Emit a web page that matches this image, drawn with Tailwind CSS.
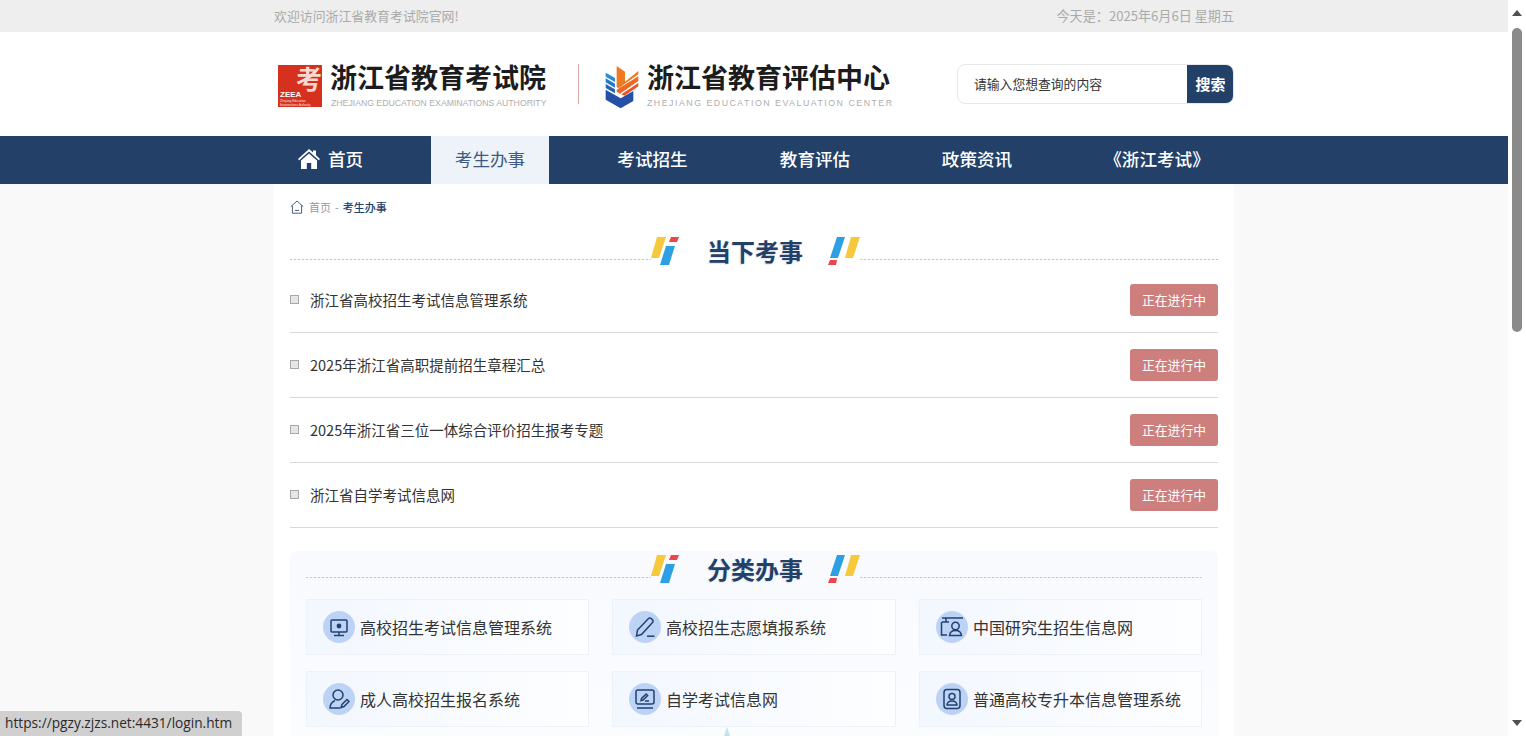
<!DOCTYPE html>
<html lang="zh-CN">
<head>
<meta charset="utf-8">
<title>考生办事</title>
<script src="https://cdn.jsdelivr.net/npm/@tailwindcss/browser@4"></script>
</head>
<body class="h-[736px] overflow-hidden bg-white font-['Noto_Sans_CJK_SC','Liberation_Sans',sans-serif]">
<div class="flex h-[736px] overflow-hidden">
  <main class="w-[1508px] h-[736px] overflow-hidden bg-[#f9f9fa]">
    <!-- top bar -->
    <div class="h-8 bg-[#eeeeee]">
      <div class="w-[960px] mx-auto h-8 flex items-center justify-between text-[12.9px] text-[#aaaaaa]">
        <span>欢迎访问浙江省教育考试院官网!</span>
        <span class="text-[13.1px]">今天是：2025年6月6日 星期五</span>
      </div>
    </div>
    <!-- header -->
    <header class="h-[104px] bg-white">
      <div class="w-[960px] mx-auto h-[104px] flex items-start">
        <div class="ml-1 mt-[33px] w-[44px] h-[42px] bg-[#d6301e] relative shrink-0">
          <span class="absolute right-0 top-0 text-[26px] leading-[25px] font-bold text-[#fbd9d0]">考</span>
          <span class="absolute left-[2px] top-[25px] text-[8px] leading-[9px] font-bold text-white font-['Liberation_Sans']">ZEEA</span>
          <span class="absolute left-[2px] top-[34px] text-[3px] leading-[4px] text-white/80 font-['Liberation_Sans'] whitespace-nowrap">Zhejiang Education<br>Examinations Authority</span>
        </div>
        <div class="ml-2 mt-[27px] w-[220px] shrink-0">
          <div class="text-[27px] leading-[36px] font-semibold text-[#1c1c1c] whitespace-nowrap">浙江省教育考试院</div>
          <div class="text-[8.7px] leading-[12px] mt-[2px] ml-px text-[#aeaeae] whitespace-nowrap font-['Liberation_Sans']">ZHEJIANG EDUCATION EXAMINATIONS AUTHORITY</div>
        </div>
        <div class="ml-[28px] mt-8 w-px h-10 bg-[#dba9a6] shrink-0"></div>
        <svg class="ml-[26px] mt-[33px] shrink-0" width="34" height="44" viewBox="105 42 102 132">
          <polygon fill="#2a8ad6" points="107,65 135,81 135,93 107,77"/>
          <polygon fill="#2878c8" points="107,82 135,98 135,110 107,94"/>
          <polygon fill="#2464b8" points="107,99 135,115 135,127 107,111"/>
          <polygon fill="#2450a8" points="107,116 152,142 190,120 190,150 152,172 107,146"/>
          <polygon fill="#ee7a22" points="140,45 165,62 165,92 205,60 205,70 146,112 140,108"/>
          <polygon fill="#ea6a24" points="205,76 205,90 150,128 140,122 140,116"/>
          <polygon fill="#e4552a" points="205,96 205,106 190,116 164,134 154,130"/>
        </svg>
        <div class="ml-2 mt-[27px] w-[246px] shrink-0">
          <div class="text-[27px] leading-[36px] font-semibold text-[#1c1c1c] whitespace-nowrap">浙江省教育评估中心</div>
          <div class="text-[8.8px] leading-[12px] mt-[2px] tracking-[1.5px] text-[#aeaeae] whitespace-nowrap font-['Liberation_Sans']">ZHEJIANG EDUCATION EVALUATION CENTER</div>
        </div>
        <div class="ml-[64px] mt-8 w-[277px] h-10 flex border border-[#e6e8ec] rounded-lg overflow-hidden shrink-0 bg-white">
          <div class="flex-1 pl-4 flex items-center text-[12.8px] text-[#333333]">请输入您想查询的内容</div>
          <div class="w-[47px] -my-px -mr-px bg-[#234069] flex items-center justify-center text-[15px] font-bold text-white">搜索</div>
        </div>
      </div>
    </header>
    <!-- nav -->
    <nav class="h-12 bg-[#234069]">
      <div class="w-[960px] mx-auto h-12 flex text-[17.6px] font-medium text-white">
        <a class="w-[157px] flex items-center pl-6 gap-2 pb-[2px]">
          <svg width="22" height="20" viewBox="0 0 22 20" fill="#ffffff"><path d="M11 0 15 3.600V1.500h3v4.800l4 3.600-1.200 1.400L11 2.600 1.200 11.300 0 9.900Z"/><path d="M11 4.400 19 11.400V20h-5.800v-6H8.800v6H3v-8.600Z"/></svg>
          <span>首页</span>
        </a>
        <a class="w-[118px] flex items-center justify-center bg-[#eef2f9] text-[#3d5a84] pb-[2px] font-normal">考生办事</a>
        <a class="w-[207px] flex items-center justify-center pb-[2px]">考试招生</a>
        <a class="w-[118px] flex items-center justify-center pb-[2px]">教育评估</a>
        <a class="w-[206px] flex items-center justify-center pb-[2px]">政策资讯</a>
        <a class="flex-1 flex items-center justify-center pb-[2px]">《浙江考试》</a>
      </div>
    </nav>
    <!-- content -->
    <div class="w-[960px] mx-auto h-[552px] bg-white px-4">
      <div class="h-[46px] flex items-center text-[11px] text-[#999999]">
        <svg width="14" height="14" viewBox="0 0 14 14" fill="none" stroke="#4a5f80" stroke-width="1"><path d="M.8 6.600 7 1l6.200 5.600"/><path d="M2.400 5.600v7.600h9.200V5.600"/><path d="M5 10.400h4"/></svg>
        <span class="ml-[5px]">首页</span>
        <span class="mx-[4px]">-</span>
        <span class="text-[#234069] font-medium">考生办事</span>
      </div>
      <!-- title 1 -->
      <div class="h-[38px] flex items-start">
        <div class="w-[361px] h-px mt-[29px] bg-[repeating-linear-gradient(90deg,#b4caee_0_2px,#e8eefa_2px_4px)]"></div>
        <div class="w-[209px] flex items-start shrink-0">
          <svg class="mt-[7px] shrink-0" width="31" height="28" viewBox="0 0 31 28"><polygon fill="#f6c83c" points="6,0 15,0 8,21 0,21"/><polygon fill="#2f9fe4" points="15,9 24,9 18,28 9,28"/><polygon fill="#e8474c" points="20,0 28,0 26,5 18,5"/></svg>
          <div class="ml-[25px] w-24 mt-[2px] text-[24px] leading-[38px] font-bold text-[#234069] whitespace-nowrap [text-shadow:-1px_1px_1px_#dde2ea]">当下考事</div>
          <svg class="ml-[25px] mt-[7px] shrink-0" width="32" height="28" viewBox="0 0 32 28"><polygon fill="#2f9fe4" points="9,0 17,0 10,21 2,21"/><polygon fill="#e8474c" points="2,23 9,23 8,28 0,28"/><polygon fill="#f6c83c" points="23,0 32,0 25,21 17,21"/></svg>
        </div>
        <div class="flex-1 h-px mt-[29px] bg-[repeating-linear-gradient(90deg,#b4caee_0_2px,#e8eefa_2px_4px)]"></div>
      </div>
      <!-- rows -->
      <ul>
        <li class="h-[65px] flex items-center justify-between border-b border-[#d9d9d9] pb-px">
          <div class="flex items-center"><span class="w-[9px] h-[9px] border border-[#a8a8a8] bg-[#e6e6e6]"></span><span class="ml-[11px] text-[14.5px] text-[#333333]">浙江省高校招生考试信息管理系统</span></div>
          <span class="w-[88px] h-8 rounded-[3px] bg-[#cc7f7d] flex items-center justify-center text-[12.8px] text-white">正在进行中</span>
        </li>
        <li class="h-[65px] flex items-center justify-between border-b border-[#d9d9d9] pb-px">
          <div class="flex items-center"><span class="w-[9px] h-[9px] border border-[#a8a8a8] bg-[#e6e6e6]"></span><span class="ml-[11px] text-[14.5px] text-[#333333]">2025年浙江省高职提前招生章程汇总</span></div>
          <span class="w-[88px] h-8 rounded-[3px] bg-[#cc7f7d] flex items-center justify-center text-[12.8px] text-white">正在进行中</span>
        </li>
        <li class="h-[65px] flex items-center justify-between border-b border-[#d9d9d9] pb-px">
          <div class="flex items-center"><span class="w-[9px] h-[9px] border border-[#a8a8a8] bg-[#e6e6e6]"></span><span class="ml-[11px] text-[14.5px] text-[#333333]">2025年浙江省三位一体综合评价招生报考专题</span></div>
          <span class="w-[88px] h-8 rounded-[3px] bg-[#cc7f7d] flex items-center justify-center text-[12.8px] text-white">正在进行中</span>
        </li>
        <li class="h-[65px] flex items-center justify-between border-b border-[#d9d9d9] pb-px">
          <div class="flex items-center"><span class="w-[9px] h-[9px] border border-[#a8a8a8] bg-[#e6e6e6]"></span><span class="ml-[11px] text-[14.5px] text-[#333333]">浙江省自学考试信息网</span></div>
          <span class="w-[88px] h-8 rounded-[3px] bg-[#cc7f7d] flex items-center justify-center text-[12.8px] text-white">正在进行中</span>
        </li>
      </ul>
      <!-- panel -->
      <section class="mt-[23px] h-[185px] px-4 rounded-t-md bg-gradient-to-b from-[#f8fafe] to-[#fbfcfe] relative">
        <div class="h-[38px] flex items-start relative top-[-3px]">
          <div class="w-[345px] h-px mt-[29px] bg-[repeating-linear-gradient(90deg,#b4caee_0_2px,#e8eefa_2px_4px)]"></div>
          <div class="w-[209px] flex items-start shrink-0">
            <svg class="mt-[7px] shrink-0" width="31" height="28" viewBox="0 0 31 28"><polygon fill="#f6c83c" points="6,0 15,0 8,21 0,21"/><polygon fill="#2f9fe4" points="15,9 24,9 18,28 9,28"/><polygon fill="#e8474c" points="20,0 28,0 26,5 18,5"/></svg>
            <div class="ml-[25px] w-24 mt-[2px] text-[24px] leading-[38px] font-bold text-[#234069] whitespace-nowrap [text-shadow:-1px_1px_1px_#dde2ea]">分类办事</div>
            <svg class="ml-[25px] mt-[7px] shrink-0" width="32" height="28" viewBox="0 0 32 28"><polygon fill="#2f9fe4" points="9,0 17,0 10,21 2,21"/><polygon fill="#e8474c" points="2,23 9,23 8,28 0,28"/><polygon fill="#f6c83c" points="23,0 32,0 25,21 17,21"/></svg>
          </div>
          <div class="flex-1 h-px mt-[29px] bg-[repeating-linear-gradient(90deg,#b4caee_0_2px,#e8eefa_2px_4px)]"></div>
        </div>
        <div class="mt-[10px] grid grid-cols-[283px_284px_283px] gap-x-[23px] gap-y-4">
          <a class="h-14 flex items-center pl-4 border border-[#edf1f8] bg-gradient-to-r from-[#f3f7fe] to-[#fdfeff] text-[16px] text-[#333333]">
            <span class="w-8 h-8 rounded-full bg-[#bcd3f5] flex items-center justify-center shrink-0">
              <svg width="24" height="24" viewBox="0 0 24 24" fill="none" stroke="#23406f" stroke-width="1.500"><rect x="4" y="5" width="16" height="12" rx="1"/><path d="M12 17v3M7 20.500h10"/><circle cx="12" cy="11" r="1.700" fill="#23406f"/></svg>
            </span>
            <span class="ml-[5px] whitespace-nowrap">高校招生考试信息管理系统</span>
          </a>
          <a class="h-14 flex items-center pl-4 border border-[#edf1f8] bg-gradient-to-r from-[#f3f7fe] to-[#fdfeff] text-[16px] text-[#333333]">
            <span class="w-8 h-8 rounded-full bg-[#bcd3f5] flex items-center justify-center shrink-0">
              <svg width="24" height="24" viewBox="0 0 24 24" fill="none" stroke="#23406f" stroke-width="1.500"><path d="M3.500 21 4.500 15 15.500 3.500a1.800 1.800 0 0 1 2.600 0l1.400 1.400a1.800 1.800 0 0 1 0 2.600L8.500 19.500Z"/><path d="M14 21.200h7.500"/></svg>
            </span>
            <span class="ml-[5px] whitespace-nowrap">高校招生志愿填报系统</span>
          </a>
          <a class="h-14 flex items-center pl-4 border border-[#edf1f8] bg-gradient-to-r from-[#f3f7fe] to-[#fdfeff] text-[16px] text-[#333333]">
            <span class="w-8 h-8 rounded-full bg-[#bcd3f5] flex items-center justify-center shrink-0">
              <svg width="26" height="22" viewBox="0 0 26 22" fill="none" stroke="#23406f" stroke-width="1.500"><path d="M3 2h21M7 2v4M3 6h7M2.500 6v13H8"/><circle cx="16.500" cy="10" r="3.700"/><path d="M10.500 19.500c.4-3.600 3-5 6-5s5.600 1.400 6 5Z"/></svg>
            </span>
            <span class="ml-[5px] whitespace-nowrap">中国研究生招生信息网</span>
          </a>
          <a class="h-14 flex items-center pl-4 border border-[#edf1f8] bg-gradient-to-r from-[#f3f7fe] to-[#fdfeff] text-[16px] text-[#333333]">
            <span class="w-8 h-8 rounded-full bg-[#bcd3f5] flex items-center justify-center shrink-0">
              <svg width="24" height="24" viewBox="0 0 24 24" fill="none" stroke="#23406f" stroke-width="1.500"><circle cx="11" cy="8" r="5"/><path d="M8 13.500C5 15 3 17.500 3 21h10"/><path d="M14 20.500l1-3 5-5 2 2-5 5Z"/></svg>
            </span>
            <span class="ml-[5px] whitespace-nowrap">成人高校招生报名系统</span>
          </a>
          <a class="h-14 flex items-center pl-4 border border-[#edf1f8] bg-gradient-to-r from-[#f3f7fe] to-[#fdfeff] text-[16px] text-[#333333]">
            <span class="w-8 h-8 rounded-full bg-[#bcd3f5] flex items-center justify-center shrink-0">
              <svg width="24" height="24" viewBox="0 0 24 24" fill="none" stroke="#23406f" stroke-width="1.500"><rect x="3" y="3" width="18" height="14" rx="2"/><path d="M8 13.500l.6-2 4.500-4.500 1.500 1.500-4.500 4.500ZM12 14h4M4 21h16"/></svg>
            </span>
            <span class="ml-[5px] whitespace-nowrap">自学考试信息网</span>
          </a>
          <a class="h-14 flex items-center pl-4 border border-[#edf1f8] bg-gradient-to-r from-[#f3f7fe] to-[#fdfeff] text-[16px] text-[#333333]">
            <span class="w-8 h-8 rounded-full bg-[#bcd3f5] flex items-center justify-center shrink-0">
              <svg width="24" height="24" viewBox="0 0 24 24" fill="none" stroke="#23406f" stroke-width="1.500"><rect x="4" y="2.500" width="16" height="19" rx="3"/><circle cx="12" cy="9.500" r="3"/><path d="M7 18c.3-2.800 2.400-4 5-4s4.700 1.200 5 4Z"/></svg>
            </span>
            <span class="ml-[5px] whitespace-nowrap">普通高校专升本信息管理系统</span>
          </a>
        </div>
        <span class="absolute left-[434px] bottom-0 w-0 h-0 border-x-[3px] border-x-transparent border-b-[9px] border-b-[#bfe3f2]"></span>
      </section>
    </div>
  </main>
  <!-- browser scrollbar -->
  <aside class="w-[18px] h-[736px] bg-white flex flex-col items-center relative shrink-0">
    <svg class="mt-[10px]" width="10" height="6" viewBox="0 0 10 6" fill="#505050"><polygon points="5,0 10,6 0,6"/></svg>
    <div class="mt-3 w-[10px] h-[304px] rounded-[5px] bg-[#8a8a8a]"></div>
    <svg class="absolute bottom-[10px]" width="10" height="6" viewBox="0 0 10 6" fill="#505050"><polygon points="0,0 10,0 5,6"/></svg>
  </aside>
</div>
<!-- status bubble -->
<div class="absolute left-0 bottom-0 w-[242px] h-[25px] bg-[#d0d0d0] rounded-tr-[4px] pl-[5px] flex items-center text-[13.7px] text-[#2a2a2a] whitespace-nowrap font-['Open_Sans',sans-serif]">https://pgzy.zjzs.net:4431/login.htm</div>
</body>
</html>
